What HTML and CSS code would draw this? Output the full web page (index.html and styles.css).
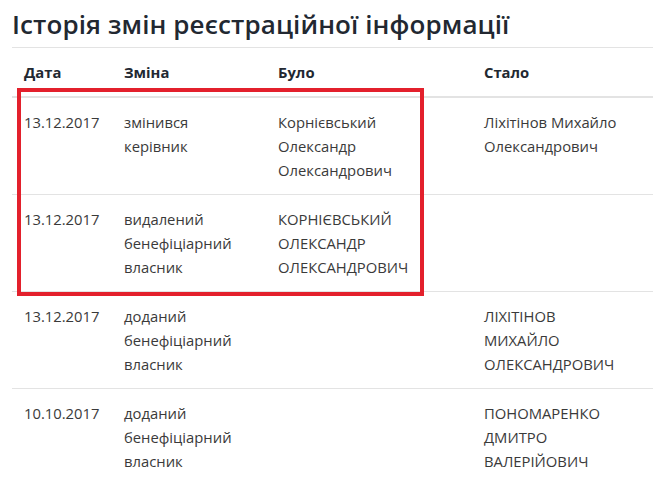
FILE: index.html
```html
<!DOCTYPE html>
<html lang="uk">
<head>
<meta charset="utf-8">
<link rel="stylesheet" href="styles.css">
</head>
<body>
<div class="page">
  <h1 class="title">Історія змін реєстраційної інформації</h1>
  <div class="table-wrap">
    <table class="history">
      <colgroup>
        <col class="c-date"><col class="c-change"><col class="c-was"><col class="c-now">
      </colgroup>
      <thead>
        <tr><th>Дата</th><th>Зміна</th><th>Було</th><th>Стало</th></tr>
      </thead>
      <tbody>
        <tr>
          <td>13.12.2017</td>
          <td>змінився<br>керівник</td>
          <td>Корнієвський<br>Олександр<br>Олександрович</td>
          <td>Ліхітінов Михайло<br>Олександрович</td>
        </tr>
        <tr>
          <td>13.12.2017</td>
          <td>видалений<br>бенефіціарний<br>власник</td>
          <td>КОРНІЄВСЬКИЙ<br>ОЛЕКСАНДР<br>ОЛЕКСАНДРОВИЧ</td>
          <td></td>
        </tr>
        <tr>
          <td>13.12.2017</td>
          <td>доданий<br>бенефіціарний<br>власник</td>
          <td></td>
          <td>ЛІХІТІНОВ<br>МИХАЙЛО<br>ОЛЕКСАНДРОВИЧ</td>
        </tr>
        <tr>
          <td>10.10.2017</td>
          <td>доданий<br>бенефіціарний<br>власник</td>
          <td></td>
          <td>ПОНОМАРЕНКО<br>ДМИТРО<br>ВАЛЕРІЙОВИЧ</td>
        </tr>
      </tbody>
    </table>
    <div class="highlight"></div>
  </div>
</div>
</body>
</html>
```
FILE: styles.css
```css
html, body {
  margin: 0;
  padding: 0;
  background: #fff;
}
body {
  font-family: "Open Sans", "Noto Sans", sans-serif;
  color: #3a3a3a;
}
.page {
  width: 641px;
  padding-left: 12px;
}
.title {
  margin: 9px 0 0;
  padding-bottom: 7px;
  border-bottom: 1px solid #e3e3e3;
  font-size: 26px;
  line-height: 31px;
  font-weight: 600;
  color: #222831;
  letter-spacing: 0.1px;
}
.table-wrap {
  position: relative;
}
.history {
  width: 100%;
  border-collapse: collapse;
  table-layout: fixed;
  font-size: 14.8px;
  line-height: 24px;
}
.c-date { width: 100px; }
.c-change { width: 154px; }
.c-was { width: 206px; }
.history th {
  text-align: left;
  font-weight: 700;
  color: #222831;
  padding: 12px;
  border-bottom: 2px solid #e3e3e3;
}
.history td {
  padding: 12px;
  vertical-align: top;
  border-top: 1px solid #e3e3e3;
}
.history tbody tr:first-child td {
  border-top: 0;
}
.highlight {
  position: absolute;
  left: 5px;
  top: 40px;
  width: 399px;
  height: 200px;
  border: 4px solid #e3202c;
  pointer-events: none;
}
```
